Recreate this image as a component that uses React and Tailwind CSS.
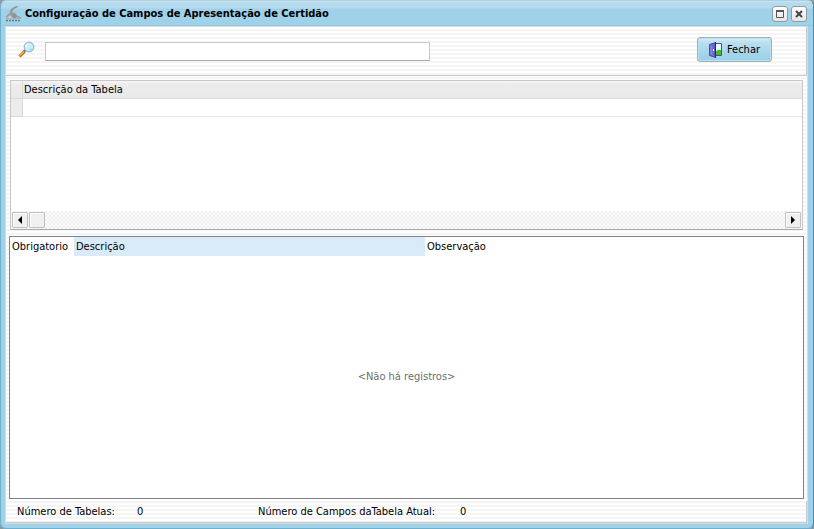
import React from 'react';

const stripes =
  'bg-[repeating-linear-gradient(180deg,#ffffff_0px,#ffffff_2px,#f5f5f5_2px,#f5f5f5_4px)]';

const scrollButton =
  'flex h-4 w-4 shrink-0 items-center justify-center rounded-[1px] border border-[#c0c0c0] bg-[#f0f0f0] shadow-[inset_1px_1px_0_#ffffff]';

const captionButton =
  'flex h-4 w-4 items-center justify-center rounded-[3px] border border-[#8f9ca3] bg-gradient-to-b from-white to-[#e4e4e4]';

function AppLogo() {
  return (
    <svg width="17" height="16" viewBox="0 0 17 16" aria-hidden="true">
      <path d="M13 0C8 1 5 3 4.500 6L1 10v3h14l1-1-4-2-1-3-3-1c0-2 2-4 5-6z" fill="#a9b4b9" />
      <path d="M12.500 .5C8 2 5.500 4 6 7l2 2" stroke="#87949b" strokeWidth="1.500" fill="none" />
      <path d="M1 11l4-3 4 4 3-2 4 2" stroke="#8b979d" fill="none" />
      <path d="M8 7l3 1 1 3-3 1-2-3z" fill="#8a959b" />
      <path d="M3 11l2-1 2 2H4z" fill="#cdd6da" />
      <path d="M1 14.500h15" stroke="#6d7980" strokeWidth="1.500" strokeDasharray="2 1" />
    </svg>
  );
}

function SearchIcon() {
  return (
    <svg className="block" width="18" height="18" viewBox="0 0 18 18" aria-hidden="true">
      <path d="M1.500 15.500L7 10" stroke="#b86e1c" strokeWidth="3" />
      <path d="M1.500 14.500L6.500 10" stroke="#f8a53a" strokeWidth="2" />
      <path d="M6 10.500l1.500-1.500" stroke="#626b7c" strokeWidth="2" />
      <circle cx="11" cy="6" r="4.700" fill="#c8f1fd" stroke="#9bbbd8" strokeWidth="1.400" />
      <path d="M8 6a3 3 0 013-3" stroke="#ffffff" strokeWidth="1.500" fill="none" />
      <path d="M14 7a3 3 0 01-3 2" stroke="#a0ddf5" strokeWidth="1.500" fill="none" />
    </svg>
  );
}

function DoorIcon() {
  return (
    <svg width="14" height="16" viewBox="0 0 14 16" aria-hidden="true">
      <path d="M6.500 1.500h6v12h-6z" fill="#e4fafd" stroke="#554893" />
      <path d="M7 9l2-1h3v5H7z" fill="#43bd1d" />
      <path d="M.5 2.500L6 .8v14.400L.5 13.500z" fill="#6c6bd6" stroke="#4b43a5" />
      <path d="M2 3.500v9" stroke="#9593ef" />
      <path d="M6.500 0v16" stroke="#30275f" />
      <path d="M4 7h1v2H4z" fill="#ffffff" />
    </svg>
  );
}

function TitleBar() {
  return (
    <header className="flex h-[25px] shrink-0 items-center bg-[linear-gradient(180deg,#c8e6f4_0px,#b3dbed_2px,#b3dbed_7px,#9fd1e8_8px,#9fd1e8_24px,#84bfda_25px)] pr-[6px] pl-1">
      <AppLogo />
      <h1 className="ml-[3px] flex-1 text-[11px] leading-4 font-bold whitespace-nowrap">
        Configuração de Campos de Apresentação de Certidão
      </h1>
      <div className="flex gap-[3px]">
        <button type="button" aria-label="Maximizar" className={captionButton}>
          <svg width="8" height="8" viewBox="0 0 8 8">
            <path d="M.5 1h7v6.500h-7z" fill="none" stroke="#555" />
            <path d="M0 1h8" stroke="#555" strokeWidth="2" />
          </svg>
        </button>
        <button type="button" aria-label="Fechar janela" className={captionButton}>
          <svg width="8" height="8" viewBox="0 0 8 8">
            <path d="M1 1l6 6M7 1L1 7" stroke="#444" strokeWidth="2" />
          </svg>
        </button>
      </div>
    </header>
  );
}

function TablesGrid() {
  return (
    <section className="mx-1 mt-1 flex h-[150px] shrink-0 flex-col border border-[#c8c8c8] border-b-[#aaaaaa] bg-white">
      <table className="w-full table-fixed border-separate border-spacing-0">
        <colgroup>
          <col className="w-3" />
          <col />
        </colgroup>
        <thead>
          <tr className="h-[18px] bg-[linear-gradient(180deg,#f7f7f7_0px,#ececec_3px,#e9e9e9_100%)]">
            <th className="border-r border-b border-[#dadada] p-0" aria-label="Indicador" />
            <th className="border-b border-[#dadada] p-0 px-px text-left leading-4 font-normal">
              Descrição da Tabela
            </th>
          </tr>
        </thead>
        <tbody>
          <tr className="h-[18px]">
            <td className="border-r border-b border-[#dadada] bg-[#ececec] p-0" />
            <td className="border-b border-[#e8e8e8] p-0" />
          </tr>
        </tbody>
      </table>
      <div className="mt-auto flex h-[18px] items-center gap-px bg-[#f8f8f8] bg-[repeating-conic-gradient(#f1f1f1_0%_25%,#fbfbfb_0%_50%)] bg-[length:4px_4px] px-px">
        <button type="button" aria-label="Rolar para a esquerda" className={scrollButton}>
          <svg width="4" height="8" viewBox="0 0 4 8">
            <path d="M4 0v8L0 4z" />
          </svg>
        </button>
        <button type="button" aria-label="Barra de rolagem" className={scrollButton} />
        <button type="button" aria-label="Rolar para a direita" className={`${scrollButton} ml-auto`}>
          <svg width="4" height="8" viewBox="0 0 4 8">
            <path d="M0 0v8l4-4z" />
          </svg>
        </button>
      </div>
    </section>
  );
}

function FieldsGrid() {
  return (
    <section className="mx-[3px] mt-[6px] flex min-h-0 flex-1 flex-col border border-[#80828c] bg-white">
      <table className="w-full table-fixed border-collapse">
        <colgroup>
          <col className="w-16" />
          <col className="w-[351px]" />
          <col />
        </colgroup>
        <thead>
          <tr className="h-[19px] text-left">
            <th className="p-0 pl-[2px] leading-4 font-normal">Obrigatorio</th>
            <th className="bg-[#d9eaf8] p-0 pl-[2px] leading-4 font-normal">Descrição</th>
            <th className="p-0 pl-[2px] leading-4 font-normal">Observação</th>
          </tr>
        </thead>
      </table>
      <p className="flex flex-1 items-center justify-center text-[#6d6d6d]">
        &lt;Não há registros&gt;
      </p>
    </section>
  );
}

export default function App() {
  return (
    <div className="h-screen min-h-[400px] bg-[#8a9aa2] font-['DejaVu_Sans_Condensed','DejaVu_Sans',sans-serif] text-[11px] leading-4 text-black">
      <div className="flex h-full flex-col overflow-hidden rounded-md border border-[#6fb0ce] border-t-[#b3cfdb] border-r-[#4d879f] bg-[#9fd1e8]">
        <TitleBar />
        <main className={`mr-[5px] mb-1 ml-1 flex min-h-0 flex-1 flex-col border border-[#d5dde1] ${stripes}`}>
          <div className="flex h-[49px] shrink-0 items-center border-r border-b border-[#c8c8c8] pr-[34px] pb-[3px] pl-3">
            <label htmlFor="busca" aria-label="Pesquisar tabela">
              <SearchIcon />
            </label>
            <input
              id="busca"
              type="text"
              className="mt-1 ml-[9px] h-[19px] w-[385px] border border-[#c8c8c8] border-b-[#aaaaaa] bg-white px-1 outline-none"
            />
            <button
              type="button"
              className="ml-auto flex h-[25px] w-[75px] items-center justify-center gap-1 rounded-[3px] border border-[#9eb0b8] bg-[linear-gradient(180deg,#d5edf7_0px,#b8dfef_5px,#a4d4e9_70%,#9bcfe6_100%)] shadow-[inset_0_0_0_1px_#bde1ef]"
            >
              <DoorIcon />
              Fechar
            </button>
          </div>
          <TablesGrid />
          <FieldsGrid />
          <footer className="mt-[2px] flex h-[22px] shrink-0 items-center border-r border-b border-[#c8c8c8] pl-[11px]">
            <div className="flex w-[241px]">
              <span className="w-[120px]">Número de Tabelas:</span>
              <output>0</output>
            </div>
            <div className="flex">
              <span className="w-[202px]">Número de Campos daTabela Atual:</span>
              <output>0</output>
            </div>
          </footer>
        </main>
      </div>
    </div>
  );
}
